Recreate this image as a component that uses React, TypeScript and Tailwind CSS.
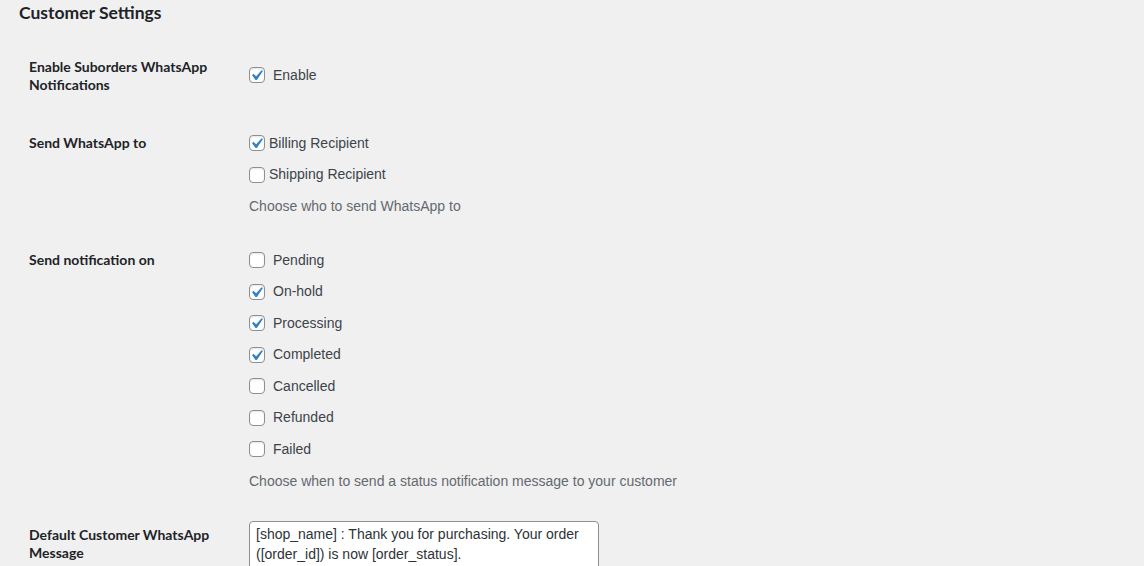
import React from 'react'

const font = { fontFamily: '"Liberation Sans", Arial, sans-serif' }
const heading = { fontFamily: 'Lato, "Liberation Sans", Arial, sans-serif' }

function Checkbox({ checked }: { checked?: boolean }) {
  return (
    <span className="relative inline-block w-[16px] h-[16px] flex-none rounded-[4px] border border-[#8c8f94] bg-white shadow-[inset_0_1px_2px_rgba(0,0,0,0.1)]">
      {checked && (
        <svg viewBox="0 0 20 20" className="absolute w-[21px] h-[21px] left-[-4px] top-[-3px]">
          <path d="M14.83 4.89l1.34.94-5.81 8.38H9.02L5.78 9.67l1.34-1.25 2.57 2.4z" fill="#3582c4" />
        </svg>
      )}
    </span>
  )
}

function Option({ label, checked, gap = 'gap-[8px]' }: { label: string; checked?: boolean; gap?: string }) {
  return (
    <label className={`flex items-center h-[20px] mt-[4px] mb-[7.5px] ${gap}`}>
      <Checkbox checked={checked} />
      <span>{label}</span>
    </label>
  )
}

function Row({ label, children }: { label: React.ReactNode; children: React.ReactNode }) {
  return (
    <div className="flex">
      <div
        className="w-[220px] flex-none pt-[20px] pb-[20px] pr-[20px] font-bold text-[14px] text-[#1d2327] leading-[18px]"
        style={heading}
      >
        {label}
      </div>
      <div className="flex-1 flex flex-col items-start py-[15px] text-[#3c434a]">{children}</div>
    </div>
  )
}

export default function App() {
  const statuses: [string, boolean][] = [
    ['Pending', false],
    ['On-hold', true],
    ['Processing', true],
    ['Completed', true],
    ['Cancelled', false],
    ['Refunded', false],
    ['Failed', false],
  ]

  return (
    <div className="min-h-screen bg-[#f0f0f1] text-[14px] text-[#3c434a] overflow-hidden" style={font}>
      <h2
        className="pl-[19px] mt-[1px] text-[17.5px] leading-[24px] font-bold text-[#1d2327]"
        style={heading}
      >
        Customer Settings
      </h2>

      <div className="pl-[29px] mt-[13px]">
        <Row label="Enable Suborders WhatsApp Notifications">
          <label className="flex items-center gap-[8px] h-[20px] mt-[12px]">
            <Checkbox checked />
            <span>Enable</span>
          </label>
        </Row>

        <Row label="Send WhatsApp to">
          <Option label="Billing Recipient" checked gap="gap-[4px]" />
          <Option label="Shipping Recipient" gap="gap-[4px]" />
          <p className="mt-[4px] leading-[20px] text-[#646970]">Choose who to send WhatsApp to</p>
        </Row>

        <Row label="Send notification on">
          {statuses.map(([s, c]) => (
            <Option key={s} label={s} checked={c} />
          ))}
          <p className="mt-[4px] leading-[20px] text-[#646970]">
            Choose when to send a status notification message to your customer
          </p>
        </Row>

        <Row label="Default Customer WhatsApp Message">
          <textarea
            className="block w-[350px] h-[110px] resize-none rounded-[4px] border border-[#8c8f94] bg-white px-[6px] py-[2px] leading-[20px] text-[#2c3338] outline-none"
            style={font}
            defaultValue="[shop_name] : Thank you for purchasing. Your order ([order_id]) is now [order_status]."
          />
        </Row>
      </div>
    </div>
  )
}
